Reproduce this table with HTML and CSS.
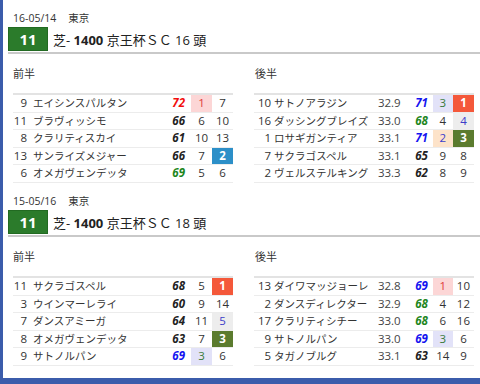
FILE: index.html
```html
<!DOCTYPE html>
<html lang="ja">
<head>
<meta charset="utf-8">
<title>京王杯ＳＣ</title>
<link rel="stylesheet" href="styles.css">
</head>
<body>
<div class="panel">
  <section class="race">
    <div class="date">16-05/14<span class="place">東京</span></div>
    <div class="head"><span class="badge">11</span><span class="title">芝- <b>1400</b> 京王杯ＳＣ 16 頭</span></div>
    <div class="sep"></div>
    <div class="halves">
      <div class="half">
        <div class="label">前半</div>
        <table class="tbl front">
          <colgroup><col class="c-num"><col class="c-name"><col class="c-score"><col class="c-rank"><col class="c-rank"></colgroup>
          <tr><td class="num">9</td><td class="name">エイシンスパルタン</td><td class="score red">72</td><td class="rank pink">1</td><td class="rank">7</td></tr>
          <tr><td class="num">11</td><td class="name">ブラヴィッシモ</td><td class="score">66</td><td class="rank">6</td><td class="rank">10</td></tr>
          <tr><td class="num">8</td><td class="name">クラリティスカイ</td><td class="score">61</td><td class="rank">10</td><td class="rank">13</td></tr>
          <tr><td class="num">13</td><td class="name">サンライズメジャー</td><td class="score">66</td><td class="rank">7</td><td class="rank blue-bg">2</td></tr>
          <tr><td class="num">6</td><td class="name">オメガヴェンデッタ</td><td class="score green">69</td><td class="rank">5</td><td class="rank">6</td></tr>
        </table>
      </div>
      <div class="half">
        <div class="label">後半</div>
        <table class="tbl back">
          <colgroup><col class="c-num2"><col class="c-name2"><col class="c-time"><col class="c-score2"><col class="c-rank2a"><col class="c-rank2b"></colgroup>
          <tr><td class="num">10</td><td class="name">サトノアラジン</td><td class="time">32.9</td><td class="score blue">71</td><td class="rank lav">3</td><td class="rank orange">1</td></tr>
          <tr><td class="num">16</td><td class="name">ダッシングブレイズ</td><td class="time">33.0</td><td class="score green">68</td><td class="rank">4</td><td class="rank gray">4</td></tr>
          <tr><td class="num">1</td><td class="name">ロサギガンティア</td><td class="time">33.1</td><td class="score blue">71</td><td class="rank peach">2</td><td class="rank olive">3</td></tr>
          <tr><td class="num">7</td><td class="name">サクラゴスペル</td><td class="time">33.1</td><td class="score">65</td><td class="rank">9</td><td class="rank">8</td></tr>
          <tr><td class="num">2</td><td class="name">ヴェルステルキング</td><td class="time">33.3</td><td class="score">62</td><td class="rank">8</td><td class="rank">9</td></tr>
        </table>
      </div>
    </div>
  </section>

  <section class="race">
    <div class="date">15-05/16<span class="place">東京</span></div>
    <div class="head"><span class="badge">11</span><span class="title">芝- <b>1400</b> 京王杯ＳＣ 18 頭</span></div>
    <div class="sep"></div>
    <div class="halves">
      <div class="half">
        <div class="label">前半</div>
        <table class="tbl front">
          <colgroup><col class="c-num"><col class="c-name"><col class="c-score"><col class="c-rank"><col class="c-rank"></colgroup>
          <tr><td class="num">11</td><td class="name">サクラゴスペル</td><td class="score">68</td><td class="rank">5</td><td class="rank orange">1</td></tr>
          <tr><td class="num">3</td><td class="name">ウインマーレライ</td><td class="score">60</td><td class="rank">9</td><td class="rank">14</td></tr>
          <tr><td class="num">7</td><td class="name">ダンスアミーガ</td><td class="score">64</td><td class="rank">11</td><td class="rank gray">5</td></tr>
          <tr><td class="num">8</td><td class="name">オメガヴェンデッタ</td><td class="score">63</td><td class="rank">7</td><td class="rank olive">3</td></tr>
          <tr><td class="num">9</td><td class="name">サトノルパン</td><td class="score blue">69</td><td class="rank lav">3</td><td class="rank">6</td></tr>
        </table>
      </div>
      <div class="half">
        <div class="label">後半</div>
        <table class="tbl back">
          <colgroup><col class="c-num2"><col class="c-name2"><col class="c-time"><col class="c-score2"><col class="c-rank2a"><col class="c-rank2b"></colgroup>
          <tr><td class="num">13</td><td class="name">ダイワマッジョーレ</td><td class="time">32.8</td><td class="score blue">69</td><td class="rank pink">1</td><td class="rank">10</td></tr>
          <tr><td class="num">2</td><td class="name">ダンスディレクター</td><td class="time">32.9</td><td class="score green">68</td><td class="rank">4</td><td class="rank">12</td></tr>
          <tr><td class="num">17</td><td class="name">クラリティシチー</td><td class="time">33.0</td><td class="score green">68</td><td class="rank">6</td><td class="rank">16</td></tr>
          <tr><td class="num">9</td><td class="name">サトノルパン</td><td class="time">33.0</td><td class="score blue">69</td><td class="rank lav">3</td><td class="rank">6</td></tr>
          <tr><td class="num">5</td><td class="name">タガノブルグ</td><td class="time">33.1</td><td class="score">63</td><td class="rank">14</td><td class="rank">9</td></tr>
        </table>
      </div>
    </div>
  </section>
</div>
</body>
</html>
```

FILE: styles.css
```css
html, body {
  margin: 0;
  padding: 0;
}
body {
  width: 480px;
  height: 384px;
  overflow: hidden;
  background: #3b5cab;
  font-family: "Open Sans", "Noto Sans CJK JP", sans-serif;
  color: #333;
}
.panel {
  margin-left: 3px;
  width: 477px;
  height: 378px;
  background: #fff;
  overflow: hidden;
}
.race {
  padding: 11px 0 0 5px;
  height: 172px;
}
.date {
  font-size: 10.5px;
  line-height: 14px;
  padding-left: 5px;
  color: #333;
}
.place {
  margin-left: 12px;
}
.head {
  display: flex;
  align-items: center;
  margin-top: 2px;
  height: 24px;
}
.badge {
  box-sizing: border-box;
  width: 40px;
  height: 24px;
  background: #2b7b2b;
  border: 1px solid #226a22;
  color: #fff;
  font-weight: bold;
  font-size: 15px;
  line-height: 22px;
  text-align: center;
}
.title {
  margin-left: 5px;
  font-size: 13px;
  color: #222;
}
.title b {
  font-weight: bold;
}
.sep {
  margin-top: 1px;
  height: 2px;
  background: #c9c9c9;
}
.halves {
  display: grid;
  grid-template-columns: 220px 220px;
  column-gap: 21px;
  padding-left: 5px;
}
.label {
  margin-top: 13px;
  font-size: 11px;
  line-height: 14px;
  height: 14px;
  color: #333;
}
.half:last-child .label {
  padding-left: 1px;
}
.tbl {
  margin-top: 12px;
  width: 220px;
  table-layout: fixed;
  border-collapse: collapse;
  border-top: 2px solid #e3e3e3;
}
.tbl td {
  height: 16.5px;
  padding: 0;
  border-bottom: 1px solid #ececec;
  font-size: 11.5px;
  line-height: 16px;
  white-space: nowrap;
  overflow: hidden;
  color: #333;
}
.c-num { width: 16px; }
.c-name { width: 138px; }
.c-score { width: 24px; }
.c-rank { width: 21px; }
.c-num2 { width: 18px; }
.c-name2 { width: 103px; }
.c-time { width: 28px; }
.c-score2 { width: 29px; }
.c-rank2a { width: 20px; }
.c-rank2b { width: 21px; }

.tbl td.num {
  text-align: right;
  padding-right: 2px;
}
.tbl.back td.num {
  padding-right: 1px;
}
.tbl td.name {
  padding-left: 4px;
  font-size: 10.5px;
}
.tbl.back td.name {
  padding-left: 2px;
}
.tbl td.time {
  text-align: right;
  padding-right: 3px;
  color: #444;
}
.tbl td.score {
  text-align: right;
  padding-right: 6px;
  font-weight: bold;
  font-style: italic;
  color: #222;
}
.tbl.back td.score {
  padding-right: 5px;
}
.tbl td.rank {
  text-align: center;
}
.tbl td.red { color: #f20d0d; }
.tbl td.green { color: #1d861d; }
.tbl td.blue { color: #1414f0; }

.tbl td.pink {
  background: #fcd6d6;
  color: #e03a3a;
}
.tbl td.orange {
  background: #f4583a;
  color: #fff;
  font-weight: bold;
}
.tbl td.blue-bg {
  background: #2c8fc8;
  color: #fff;
  font-weight: bold;
}
.tbl td.olive {
  background: #5b7b2e;
  color: #fff;
  font-weight: bold;
}
.tbl td.lav {
  background: #e2e2f8;
  color: #3a7a3a;
}
.tbl td.gray {
  background: #ededed;
  color: #3c3cc8;
}
.tbl td.peach {
  background: #fde3c9;
  color: #3c3ccc;
}
```
